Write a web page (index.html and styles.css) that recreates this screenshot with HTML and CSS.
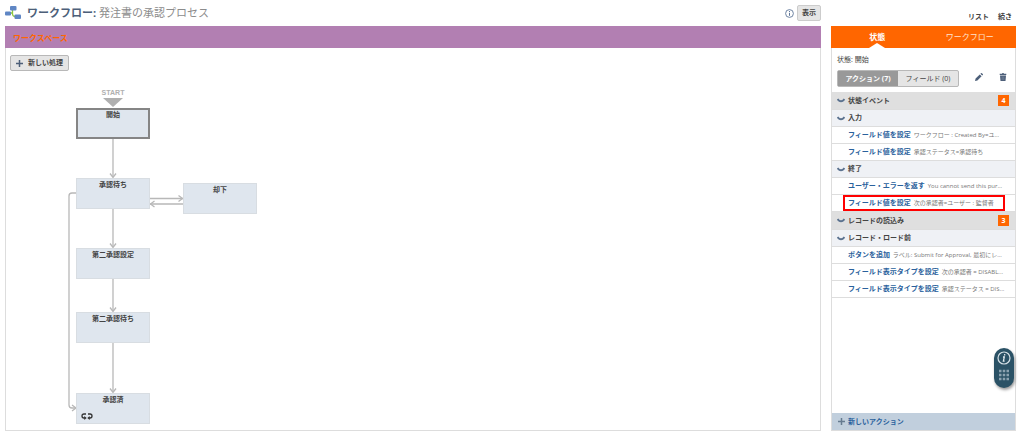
FILE: index.html
```
<!DOCTYPE html>
<html lang="ja">

<head>
    <meta charset="UTF-8">
    <meta name="viewport" content="width=device-width, initial-scale=1.0">
    <title>ワークフロー: 発注書の承認プロセス</title>
    <link rel="stylesheet" href="styles.css">
</head>

<body>
    <header class="topbar">
        <div class="topbar-left">
            <svg class="logo" width="16" height="14" viewBox="0 0 16 14">
                <path d="M7.500 4v4q0 2 2 2.500h1M5 7h2.500" fill="none" stroke="#8cc63f" stroke-width="1.300"/>
                <rect x="5" y="0" width="6.500" height="4.500" rx="1" fill="#5f86c4"/>
                <rect x="0" y="5.500" width="6" height="4" rx="1" fill="#5f86c4"/>
                <rect x="9.500" y="8.500" width="6.500" height="4.500" rx="1" fill="#5f86c4"/>
            </svg>
            <h1>ワークフロー: <span>発注書の承認プロセス</span></h1>
            <svg class="info" width="9" height="9" viewBox="0 0 9 9">
                <circle cx="4.500" cy="4.500" r="3.900" fill="none" stroke="#607799" stroke-width="0.900"/>
                <path d="M4.500 2v1M4.500 3.800v3" stroke="#607799" stroke-width="1"/>
            </svg>
            <button class="btn">表示</button>
        </div>
        <nav class="topbar-right">
            <a href="#">リスト</a>
            <a href="#">続き</a>
        </nav>
    </header>

    <main class="content">
        <section class="workspace">
            <h2>ワークスペース</h2>
            <div class="canvas">
                <button class="btn new-state">
                    <svg width="7" height="7" viewBox="0 0 7 7"><path d="M3.500 0v7M0 3.500h7" stroke="#4d5f79" stroke-width="1.500"/></svg>
                    新しい処理
                </button>

                <svg class="lines" width="260" height="382" viewBox="0 0 260 382">
                    <path d="M97 50h20l-10 9z" fill="#b0b0b0"/>
                    <g fill="none" stroke="#b8b8b8" stroke-width="1.300">
                        <path d="M107 90v39M107 160v39M107 230v33M107 294v50"/>
                        <path d="M144 150.500h33M177 156h-33"/>
                        <path d="M71 145h-5q-3 0-3 3V357q0 3 3 3h4"/>
                        <path d="M104 125.500l3 4 3-4M104 195.500l3 4 3-4M104 259.500l3 4 3-4M104 340.500l3 4 3-4"/>
                        <path d="M172.500 147.500l4 3-4 3M148.500 153l-4 3 4 3M66 357l4 3-4 3"/>
                    </g>
                </svg>

                <div class="start-label">START</div>
                <div class="node node-start">開始</div>
                <div class="node node-wait">承認待ち</div>
                <div class="node node-rejected">却下</div>
                <div class="node node-second">第二承認設定</div>
                <div class="node node-second-wait">第二承認待ち</div>
                <div class="node node-approved">承認済
                    <svg class="loop" width="12" height="7" viewBox="0 0 12 7">
                        <path d="M5 1H3Q1 1 1 3t2 2h1M7 1h2q2 0 2 2T9 5H8" fill="none" stroke="#333" stroke-width="1.300"/>
                        <path d="M3.300 3l2.400 2-2.400 2zM8.700 3L6.300 5l2.400 2z" fill="#333"/>
                    </svg>
                </div>
            </div>
        </section>

        <aside class="panel">
            <div class="tabs">
                <button class="tab active">状態</button>
                <button class="tab">ワークフロー</button>
            </div>
            <div class="state">
                <p>状態: 開始</p>
                <div class="state-tools">
                    <div class="switch">
                        <button class="on">アクション (7)</button>
                        <button>フィールド (0)</button>
                    </div>
                    <button class="icon-btn" aria-label="編集">
                        <svg width="8" height="8" viewBox="0 0 8 8"><path d="M0 8l.6-2.400L4.800 1.400l1.800 1.800L2.400 7.400zM5.400.8l.6-.6q.4-.4.9 0l.9.9q.4.5 0 .9l-.6.6z" fill="#4d5f79"/></svg>
                    </button>
                    <button class="icon-btn" aria-label="削除">
                        <svg width="8" height="8" viewBox="0 0 8 8"><path d="M.7.800h2.300L3.500 0h1L5 .800h2.300V2H.700zM1 2.600h6L6.500 8h-5z" fill="#4d5f79"/><path d="M3.200 3.500v3.500M4.800 3.500v3.500" stroke="#8f9bad" stroke-width="0.500"/></svg>
                    </button>
                </div>
            </div>

            <ul class="actions">
                <li class="group"><svg class="chev" viewBox="0 0 8 5"><path d="M.5 1q3.500 4.500 7 0"/></svg>状態イベント<span class="count">4</span></li>
                <li class="subgroup"><svg class="chev" viewBox="0 0 8 5"><path d="M.5 1q3.500 4.500 7 0"/></svg>入力</li>
                <li class="action"><a href="#">フィールド値を設定</a> <span>ワークフロー : Created By=ユ...</span></li>
                <li class="action"><a href="#">フィールド値を設定</a> <span>承認ステータス=承認待ち</span></li>
                <li class="subgroup"><svg class="chev" viewBox="0 0 8 5"><path d="M.5 1q3.500 4.500 7 0"/></svg>終了</li>
                <li class="action"><a href="#">ユーザー・エラーを返す</a> <span>You cannot send this pur...</span></li>
                <li class="action marked"><a href="#">フィールド値を設定</a> <span>次の承認者=ユーザー : 監督者</span></li>
                <li class="group"><svg class="chev" viewBox="0 0 8 5"><path d="M.5 1q3.500 4.500 7 0"/></svg>レコードの読込み<span class="count">3</span></li>
                <li class="subgroup"><svg class="chev" viewBox="0 0 8 5"><path d="M.5 1q3.500 4.500 7 0"/></svg>レコード・ロード前</li>
                <li class="action"><a href="#">ボタンを追加</a> <span>ラベル: Submit for Approval, 最初にレ...</span></li>
                <li class="action"><a href="#">フィールド表示タイプを設定</a> <span>次の承認者 = DISABL...</span></li>
                <li class="action"><a href="#">フィールド表示タイプを設定</a> <span>承認ステータス = DIS...</span></li>
            </ul>

            <button class="new-action">
                <svg width="7" height="7" viewBox="0 0 7 7"><path d="M3.500 0v7M0 3.500h7" stroke="#667b90" stroke-width="1.500"/></svg>
                新しいアクション
            </button>
        </aside>
    </main>

    <div class="helper">
        <svg width="20" height="40" viewBox="0 0 20 40">
            <circle cx="10" cy="10" r="6" fill="none" stroke="#d5e0e6" stroke-width="1.200"/>
            <path d="M10.800 6.200l-.3 1.300M9 9h1.300l-.9 4.200h1.200" fill="none" stroke="#e4ecf0" stroke-width="1.300"/>
            <path d="M5 23h10M5 27h10M5 31h10" stroke="#8ba2b0" stroke-width="2.500" stroke-dasharray="2.500 1.250"/>
        </svg>
    </div>
</body>

</html>
```
FILE: styles.css
```
* {
    margin: 0;
    padding: 0;
    box-sizing: border-box;
}

body {
    min-height: 100vh;
    padding: 5px 8px 13px 5px;
    display: flex;
    flex-direction: column;
    background: #fff;
    color: #444;
    font-family: "Open Sans", "Noto Sans CJK JP", sans-serif;
    font-size: 7px;
    line-height: 10px;
}

button {
    font: inherit;
    color: inherit;
    border: none;
    background: none;
    cursor: pointer;
}

a {
    color: inherit;
    text-decoration: none;
}

svg {
    flex: none;
}

/* header */
.topbar,
.content {
    display: grid;
    grid-template-columns: 1fr 185px;
    gap: 10px;
}

.topbar {
    height: 21px;
}

.topbar-left {
    display: flex;
    align-items: center;
    height: 16px;
}

.topbar h1 {
    margin-left: 6px;
    margin-right: auto;
    font-size: 11px;
    line-height: 16px;
    color: #4d5f79;
}

.topbar h1 span {
    font-weight: normal;
    color: #8c8c8c;
}

.info {
    margin-right: 3px;
}

.btn {
    display: flex;
    align-items: center;
    gap: 5px;
    height: 16px;
    padding: 0 4px;
    border: 1px solid #ccc;
    border-radius: 2px;
    background: #e5e5e5;
    font-weight: 600;
}

.topbar-right {
    display: flex;
    justify-content: flex-end;
    gap: 9px;
    padding: 7px 4px 0 0;
    font-weight: 600;
}

.content {
    flex: 1;
}

/* workspace */
.workspace {
    display: flex;
    flex-direction: column;
    border: 1px solid #ddd;
    border-top: none;
}

.workspace h2 {
    margin: 0 -1px;
    padding: 0 8px;
    font-size: 8px;
    line-height: 24px;
    height: 22px;
    color: #ff6600;
    background: #b27fb2;
}

.canvas {
    flex: 1;
    position: relative;
    min-height: 382px;
    padding: 7px 4px;
}

.new-state {
    padding: 0 5px;
    border-color: #b8b8b8;
}

.lines {
    position: absolute;
    left: 0;
    top: 0;
}

.start-label {
    position: absolute;
    left: 87px;
    top: 40px;
    width: 40px;
    text-align: center;
    font-family: "Liberation Sans", Arial, sans-serif;
    font-weight: bold;
    color: #b0b0b0;
}

.node {
    position: absolute;
    left: 70px;
    width: 74px;
    height: 31px;
    padding-top: 1px;
    border: 1px solid #d8dde2;
    background: #dfe6ee;
    text-align: center;
    font-weight: 600;
}

.node-start {
    top: 60px;
    border: 2px solid #858585;
    padding-top: 0;
}

.node-wait {
    top: 130px;
}

.node-rejected {
    left: 177px;
    top: 135px;
}

.node-second {
    top: 200px;
}

.node-second-wait {
    top: 264px;
}

.node-approved {
    top: 345px;
}

.loop {
    position: absolute;
    left: 4px;
    bottom: 3px;
}

/* side panel */
.panel {
    display: flex;
    flex-direction: column;
    min-width: 0;
    border: 1px solid #ddd;
    border-top: none;
}

.tabs {
    display: flex;
    height: 22px;
    margin: 0 -1px;
    background: #ff6600;
}

.tab {
    flex: 1;
    position: relative;
    font-size: 8px;
    color: #ffe3d0;
}

.tab.active {
    font-weight: bold;
    color: #fff;
}

.tab.active::after {
    content: "";
    position: absolute;
    left: 50%;
    bottom: 0;
    margin-left: -8px;
    border: 8px solid transparent;
    border-top: none;
    border-bottom: 5px solid #fff;
}

.state {
    height: 44px;
    padding: 7px 5px;
}

.state-tools {
    display: flex;
    align-items: center;
    margin-top: 5px;
}

.switch {
    display: flex;
    height: 17px;
    margin-right: auto;
    border: 1px solid #b8b8b8;
    border-radius: 2px;
    background: #e5e5e5;
}

.switch button {
    width: 60px;
}

.switch .on {
    background: #999;
    color: #fff;
    font-weight: bold;
}

.icon-btn {
    display: flex;
    margin-left: 16px;
    margin-bottom: 3px;
}

.icon-btn:last-child {
    margin-right: 3px;
}

.actions {
    list-style: none;
    flex: 1;
}

.actions li {
    height: 17px;
    line-height: 16px;
    border-bottom: 1px solid #ddd;
}

.actions .group,
.actions .subgroup {
    display: flex;
    align-items: center;
    padding: 0 6px 0 5px;
    font-weight: 600;
}

.actions .group {
    height: 18px;
    background: #dfdfdf;
}

.actions .subgroup {
    background: #eff1f5;
}

.chev {
    width: 8px;
    height: 5px;
    margin-right: 3px;
    fill: none;
    stroke: #5c7390;
    stroke-width: 2;
}

.count {
    width: 11px;
    height: 11px;
    margin-left: auto;
    line-height: 11px;
    text-align: center;
    font-weight: bold;
    color: #fff;
    background: #ff6600;
}

.actions .action {
    position: relative;
    padding: 0 6px 0 16px;
    white-space: nowrap;
    overflow: hidden;
    text-overflow: ellipsis;
}

.action a {
    font-weight: bold;
    color: #2a619c;
}

.action span {
    margin-left: 1px;
    font-size: 6px;
    color: #777;
}

.marked::after {
    content: "";
    position: absolute;
    left: 11px;
    right: 10px;
    top: 0;
    bottom: 0;
    border: 2px solid #f00;
}

.new-action {
    display: flex;
    align-items: center;
    gap: 3px;
    height: 17px;
    padding: 0 6px;
    background: #c1cfdd;
    color: #2a619c;
    font-weight: bold;
}

/* floating help */
.helper {
    position: fixed;
    right: 10px;
    bottom: 56px;
    width: 20px;
    height: 40px;
    border-radius: 10px;
    background: #2b5266;
    box-shadow: 1px 2px 3px rgba(0, 0, 0, 0.4);
}
```
